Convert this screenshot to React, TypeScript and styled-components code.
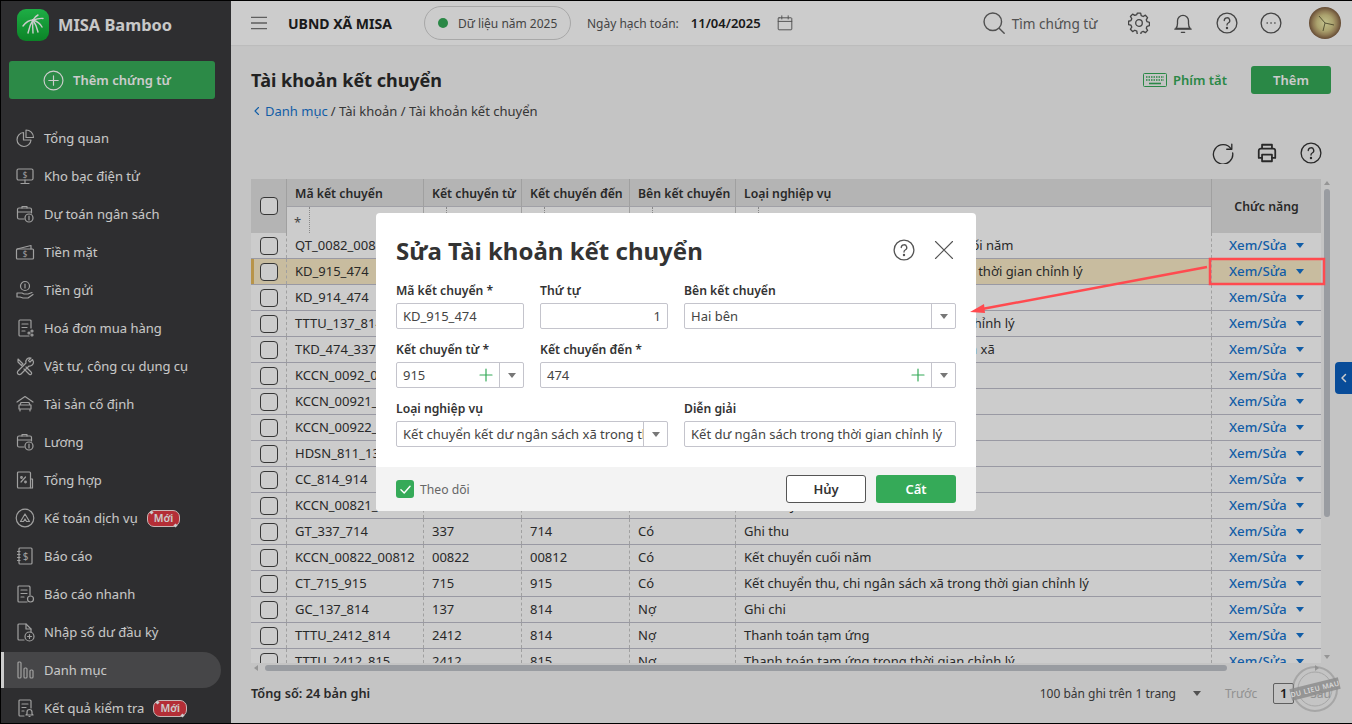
import React from "react"
import styled, { createGlobalStyle } from "styled-components"

const COLUMNS = "35px 137px 98px 108px 106px 476px 110px"

const GlobalStyle = createGlobalStyle`
	html, body {
		margin: 0;
		padding: 0;
		width: 1352px;
		height: 724px;
		overflow: hidden;
		font-family: "Noto Sans", "Open Sans", sans-serif;
		font-size: 13px;
		color: #333;
	}
	* {
		box-sizing: border-box;
	}
`

const Page = styled.div`
	position: relative;
	display: flex;
	width: 1352px;
	height: 724px;
	overflow: hidden;
	background: #f5f5f5;
	border-top: 1px solid #000;
	border-bottom: 1px solid #000;
`

const Sidebar = styled.aside`
	flex: 0 0 231px;
	border-left: 1px solid #000;
	background: #3a3a3c;
	overflow: hidden;
`

const LogoRow = styled.div`
	display: flex;
	align-items: center;
	gap: 9px;
	height: 47px;
	padding-left: 16px;
	color: #fbfbfb;
	font-size: 16.4px;
	font-weight: 700;
`

const AddVoucher = styled.button`
	display: flex;
	align-items: center;
	gap: 9px;
	width: 206px;
	height: 38px;
	margin: 13px 0 0 8px;
	padding: 0 0 0 34px;
	border: 0;
	border-radius: 3px;
	background: #37ad59;
	color: #fff;
	font: 600 13px "Noto Sans", sans-serif;
`

const Nav = styled.nav`
	margin-top: 20px;
`

const NavItem = styled.div<{ $active?: boolean }>`
	display: flex;
	align-items: center;
	gap: 9px;
	height: ${(p) => (p.$active ? "36px" : "38px")};
	margin: ${(p) => (p.$active ? "1px 10px 1px 0" : "0 10px 0 0")};
	padding-left: 11px;
	border-left: 3px solid ${(p) => (p.$active ? "#fff" : "transparent")};
	border-radius: ${(p) => (p.$active ? "0 18px 18px 0" : "0")};
	background: ${(p) => (p.$active ? "#58585a" : "transparent")};
	color: #fafafa;
	font-size: 13px;
	white-space: nowrap;
`

const NewBadge = styled.span`
	position: relative;
	height: 17px;
	padding: 0 6px;
	border: 1px solid #fbe3e3;
	border-radius: 7px;
	background: #e23a44;
	color: #fff;
	font-size: 10.5px;
	font-weight: 600;
	line-height: 15px;

	&::before,
	&::after {
		content: "";
		position: absolute;
		width: 3px;
		height: 3px;
		background: #fff;
		transform: rotate(45deg);
	}
	&::before {
		top: 0;
		left: 2px;
	}
	&::after {
		right: 2px;
		bottom: -1px;
	}
`

const Main = styled.main`
	display: flex;
	flex: 1;
	flex-direction: column;
	min-width: 0;
`

const Topbar = styled.header`
	display: flex;
	align-items: center;
	flex: 0 0 44px;
	padding-left: 20px;
	background: #fff;
	box-shadow: 0 1px 1px rgba(0, 0, 0, 0.04);
`

const OrgName = styled.span`
	margin-left: 21px;
	color: #222;
	font-size: 14px;
	font-weight: 700;
`

const YearPill = styled.div`
	display: flex;
	align-items: center;
	gap: 10px;
	width: 147px;
	height: 34px;
	margin-left: 32px;
	padding-left: 13px;
	border: 1px solid #d2d2d2;
	border-radius: 17px;
	color: #555;
	font-size: 12px;
`

const GreenDot = styled.i`
	width: 10px;
	height: 10px;
	border-radius: 50%;
	background: #35aa58;
`

const PostLabel = styled.span`
	margin-left: 16px;
	color: #555;
	font-size: 12px;
`

const PostDate = styled.span`
	margin: 0 16px 0 12px;
	color: #222;
	font-size: 13px;
	font-weight: 600;
`

const SearchText = styled.span`
	margin-left: 6px;
	color: #666;
	font-size: 13.6px;
`

const SearchBox = styled.div`
	display: flex;
	align-items: center;
	margin-left: 189px;
`

const TopIcons = styled.div`
	display: flex;
	align-items: center;
	gap: 22px;
	margin-left: 31px;
`

const Content = styled.div`
	display: flex;
	flex: 1;
	flex-direction: column;
	min-height: 0;
	padding: 0 21px 0 20px;
`

const TitleRow = styled.div`
	display: flex;
	align-items: center;
	flex: 0 0 28px;
	margin-top: 21px;
`

const PageTitle = styled.h1`
	flex: 1;
	margin: 0;
	color: #2b2b2b;
	font-size: 18px;
	font-weight: 700;
`

const Shortcut = styled.span`
	display: flex;
	align-items: center;
	gap: 6px;
	margin-right: 24px;
	color: #35aa58;
	font-size: 13px;
	font-weight: 600;
`

const GreenButton = styled.button<{ $width?: number }>`
	width: ${(p) => p.$width ?? 80}px;
	height: 28px;
	border: 0;
	border-radius: 3px;
	background: #35aa58;
	color: #fff;
	font: 600 13px "Noto Sans", sans-serif;
`

const Breadcrumb = styled.div`
	display: flex;
	align-items: center;
	gap: 3px;
	height: 20px;
	margin-top: 7px;
	padding-left: 1px;
	color: #444;
	font-size: 13px;
`

const CrumbLink = styled.span`
	color: #1675d1;
`

const Toolbar = styled.div`
	display: flex;
	align-items: center;
	justify-content: flex-end;
	gap: 22px;
	flex: 0 0 24px;
	margin-top: 20px;
	margin-bottom: 14px;
	padding-right: 9px;
`

const TableRegion = styled.div`
	display: grid;
	grid-template-columns: 1070px 10px;
	grid-template-rows: 484px 10px;
`

const TableClip = styled.div`
	overflow: hidden;
`

const HeadGrid = styled.div`
	display: grid;
	grid-template-columns: ${COLUMNS};
	grid-template-rows: 28px 26px;
	border-bottom: 1px solid #c0c0cc;
	height: 54px;
`

const HeadTall = styled.div<{ $center?: boolean }>`
	display: flex;
	align-items: center;
	justify-content: center;
	grid-row: 1 / 3;
	grid-column: ${(p) => (p.$center ? 7 : 1)};
	background: #e2e2e2;
	border-left: ${(p) => (p.$center ? "1px solid #c8c8c8" : "0")};
	color: #333;
	font-size: 12.25px;
	font-weight: 600;
`

const HeadCell = styled.div`
	display: flex;
	align-items: center;
	padding: 2px 0 0 8px;
	border-left: 1px solid #c8c8c8;
	border-bottom: 1px solid #c8c8d0;
	background: #e2e2e2;
	color: #333;
	font-size: 12.25px;
	font-weight: 600;
	white-space: nowrap;
`

const FilterCell = styled.div`
	display: flex;
	align-items: center;
	border-left: 1px solid #c8c8c8;
	background: #fff;
`

const FilterOp = styled.span`
	flex: 0 0 23px;
	height: 100%;
	padding: 6px 0 0 7px;
	border-right: 1px dotted #aaa;
	color: #555;
	font-size: 13px;
`

const BodyRow = styled.div<{ $marked?: boolean }>`
	display: grid;
	grid-template-columns: ${COLUMNS};
	height: 26px;
	border-bottom: 1px solid #c0c0cc;
	background: ${(p) => (p.$marked ? "#fbecc7" : "#fff")};
	box-shadow: ${(p) => (p.$marked ? "inset 3px 0 0 #e6b95c" : "none")};
`

const Cell = styled.div`
	padding-left: 8px;
	border-left: 1px dashed #c8c8c8;
	color: #333;
	font-size: 13px;
	line-height: 25px;
	white-space: nowrap;
	overflow: hidden;
`

const CheckCell = styled.div`
	display: flex;
	align-items: center;
	justify-content: center;
`

const Check = styled.span`
	width: 18px;
	height: 18px;
	border: 1px solid #444;
	border-radius: 4px;
	background: #fff;
`

const ActionCell = styled(Cell)`
	display: flex;
	align-items: center;
	gap: 9px;
	padding-left: 17px;
	color: #1675d1;
	font-size: 13.3px;
	font-weight: 500;
`

const Caret = styled.i<{ $color?: string; $size?: number }>`
	display: inline-block;
	width: 0;
	height: 0;
	border-left: ${(p) => p.$size ?? 4}px solid transparent;
	border-right: ${(p) => p.$size ?? 4}px solid transparent;
	border-top: ${(p) => (p.$size ?? 4) + 1}px solid ${(p) => p.$color ?? "#777"};
`

const VRail = styled.div`
	display: flex;
	flex-direction: column;
	align-items: center;
	padding: 2px 0 0 2px;
`

const VThumb = styled.div`
	width: 6px;
	height: 328px;
	margin-top: 4px;
	border-radius: 3px;
	background: #c0c3ca;
`

const ArrowUp = styled.i`
	width: 0;
	height: 0;
	border-left: 3px solid transparent;
	border-right: 3px solid transparent;
	border-bottom: 4px solid #bbb;
`

const ArrowDown = styled(ArrowUp)`
	margin-top: auto;
	margin-bottom: 4px;
	transform: rotate(180deg);
`

const HRail = styled.div`
	display: flex;
	align-items: center;
	padding: 0 2px 0 3px;
`

const HThumb = styled.div`
	flex: 0 0 962px;
	height: 6px;
	margin-left: 7px;
	border-radius: 3px;
	background: #c0c3ca;
`

const ArrowLeft = styled.i`
	width: 0;
	height: 0;
	border-top: 3px solid transparent;
	border-bottom: 3px solid transparent;
	border-right: 4px solid #bbb;
`

const ArrowRight = styled(ArrowLeft)`
	margin-left: auto;
	transform: rotate(180deg);
`

const Footer = styled.footer`
	display: flex;
	align-items: center;
	flex: 1;
	padding-bottom: 10px;
`

const Total = styled.span`
	flex: 1;
	color: #333;
	font-size: 12.75px;
	font-weight: 600;
`

const PageSize = styled.span`
	margin-right: 17px;
	color: #444;
	font-size: 12px;
`

const PageMuted = styled.span<{ $first?: boolean }>`
	margin-left: ${(p) => (p.$first ? "24px" : "0")};
	color: #b5b5b5;
	font-size: 12px;
`

const PageNumber = styled.span`
	width: 21px;
	height: 21px;
	margin: 0 16px;
	border: 1px solid #777;
	border-radius: 2px;
	color: #222;
	font-size: 13px;
	font-weight: 600;
	line-height: 19px;
	text-align: center;
`

const Overlay = styled.div`
	position: absolute;
	inset: -1px 0;
	display: flex;
	align-items: center;
	justify-content: center;
	background: rgba(0, 0, 0, 0.2);
`

const Modal = styled.div`
	display: flex;
	flex-direction: column;
	width: 600px;
	height: 298px;
	border-radius: 4px;
	overflow: hidden;
	background: #fff;
`

const ModalHead = styled.div`
	display: flex;
	align-items: center;
	gap: 19px;
	flex: 0 0 68px;
	padding: 6px 22px 0 20px;
`

const ModalTitle = styled.h2`
	flex: 1;
	margin: 0;
	color: #333;
	font-size: 24px;
	font-weight: 700;
`

const FormGrid = styled.div`
	display: grid;
	grid-template-columns: 128px 128px 272px;
	column-gap: 16px;
	row-gap: 11px;
	flex: 1;
	align-content: start;
	padding: 0 20px;
`

const Field = styled.div<{ $span?: number }>`
	grid-column: auto / span ${(p) => p.$span ?? 1};
`

const FieldLabel = styled.label`
	display: block;
	height: 18px;
	margin-bottom: 4px;
	color: #333;
	font-size: 12.2px;
	font-weight: 600;
	line-height: 20px;
`

const Control = styled.div`
	display: flex;
	align-items: center;
	height: 26px;
	border: 1px solid #c4c4cc;
	border-radius: 2px;
	background: #fff;
	color: #444;
	font-size: 13px;
`

const ControlText = styled.span<{ $right?: boolean }>`
	flex: 1;
	min-width: 0;
	padding: 0 6px;
	overflow: hidden;
	text-align: ${(p) => (p.$right ? "right" : "left")};
	white-space: nowrap;
`

const PlusMark = styled.span`
	display: flex;
	margin-right: 5px;
`

const DropButton = styled.span`
	display: flex;
	align-items: center;
	justify-content: center;
	flex: 0 0 24px;
	height: 100%;
	border-left: 1px solid #c4c4cc;
`

const ModalFooter = styled.div`
	display: flex;
	align-items: center;
	flex: 0 0 44px;
	padding: 0 20px;
	background: #f3f3f3;
`

const GreenCheck = styled.span`
	display: flex;
	align-items: center;
	justify-content: center;
	width: 18px;
	height: 18px;
	border-radius: 3px;
	background: #35aa58;
`

const WatchLabel = styled.span`
	flex: 1;
	margin-left: 6px;
	color: #666;
	font-size: 12.2px;
`

const CancelButton = styled.button`
	width: 80px;
	height: 28px;
	margin-right: 10px;
	border: 1px solid #555;
	border-radius: 3px;
	background: #fff;
	color: #333;
	font: 600 13px "Noto Sans", sans-serif;
`

const BlueTab = styled.div`
	position: absolute;
	top: 361px;
	right: 0;
	display: flex;
	align-items: center;
	justify-content: center;
	width: 17px;
	height: 32px;
	border-radius: 4px 0 0 4px;
	background: #0a5fc0;
`

const Annotation = styled.svg`
	position: absolute;
	top: -1px;
	left: 0;
	pointer-events: none;
`

const Stamp = styled.svg`
	position: absolute;
	top: 663px;
	left: 1285px;
`

const Ico = ({ children, size = 20, color = "#c8c8c8", width = 1.2 }: { children: React.ReactNode; size?: number; color?: string; width?: number }) => (
	<svg width={size} height={size} viewBox="0 0 20 20" fill="none" stroke={color} strokeWidth={width} strokeLinecap="round" strokeLinejoin="round" style={{ flex: "none" }}>
		{children}
	</svg>
)

const navIcons: Record<string, React.ReactNode> = {
	pie: (
		<>
			<path d="M8.5 4.5a7 7 0 1 0 7.5 7.5H8.5z" />
			<path d="M11 2v7.5h7.5A7.5 7.5 0 0 0 11 2z" />
		</>
	),
	monitor: (
		<>
			<rect x="2" y="3" width="16" height="11" rx="1.5" />
			<path d="M10 14v3M6 17.5h8" />
			<text x="10" y="11.5" fontSize="8" fill="#c8c8c8" stroke="none" textAnchor="middle">$</text>
		</>
	),
	budget: (
		<>
			<path d="M9 15H4a1.5 1.5 0 0 1-1.5-1.5v-8A1.5 1.5 0 0 1 4 4h11a1.5 1.5 0 0 1 1.5 1.5V9" />
			<path d="M2.5 8h14M7 4V2.5h5V4" />
			<circle cx="14" cy="14" r="4" />
			<path d="M14 12v4" />
		</>
	),
	cash: (
		<>
			<path d="M2 7l14-3.5V7" />
			<rect x="1.5" y="7" width="17" height="10" rx="1" />
			<text x="10" y="15" fontSize="8" fill="#c8c8c8" stroke="none" textAnchor="middle">$</text>
		</>
	),
	deposit: (
		<>
			<circle cx="10" cy="6" r="4.5" />
			<path d="M10 4v4" />
			<path d="M2 13h5l2 1h4l4-1.5M2 13v4h3l3 1h5l5-3.5" />
		</>
	),
	invoice: (
		<>
			<path d="M16 10V3a1 1 0 0 0-1-1H5a1 1 0 0 0-1 1v14a1 1 0 0 0 1 1h9" />
			<path d="M7 6h6M7 9.5h5M7 13h3" />
			<circle cx="17" cy="13" r="1" />
			<circle cx="14" cy="15" r="1" />
			<circle cx="17" cy="17" r="1" />
		</>
	),
	tools: (
		<>
			<path d="M3 3l5 5-1.5 1.5L3 6zM11 11l5.5 5.5a1.5 1.5 0 0 1-2 2L9 13" />
			<path d="M17.5 3.5l-2.5 2.5-1.5-1.5L16 2a4 4 0 0 0-5 5L3 15a2 2 0 0 0 3 3l8-8a4 4 0 0 0 4.5-4z" />
		</>
	),
	asset: (
		<>
			<path d="M2 8l8-5.5L18 8" />
			<path d="M5 11l1-2.5h8l1 2.5M4 11h12v4H4zM5 15v2M15 15v2" />
		</>
	),
	tax: (
		<>
			<rect x="2.5" y="2" width="13" height="16" rx="1" />
			<path d="M15.5 9h2v9h-2M6 12l4.5-5" />
			<circle cx="6.5" cy="7.5" r=".8" />
			<circle cx="10.5" cy="12" r=".8" />
		</>
	),
	service: (
		<>
			<circle cx="10" cy="10" r="8.8" />
			<path d="M5.5 13.5L10 6l4.5 7.5h-3L10 11l-1.5 2.5z" />
		</>
	),
	report: (
		<>
			<rect x="4" y="2" width="13" height="16" rx="1" />
			<path d="M2.5 5.5H5M2.5 8.5H5M2.5 11.5H5M2.5 14.5H5" />
			<text x="10.5" y="13.5" fontSize="10" fill="#c8c8c8" stroke="none" textAnchor="middle">$</text>
		</>
	),
	quick: (
		<>
			<path d="M12 18H4a1 1 0 0 1-1-1V3a1 1 0 0 1 1-1h10l1 1v8" />
			<path d="M6 6h6M6 9.5h6M6 13h3" />
			<circle cx="15.5" cy="15" r="3" />
		</>
	),
	opening: (
		<>
			<path d="M9 18H4a1 1 0 0 1-1-1V3a1 1 0 0 1 1-1h7l5 5v3" />
			<path d="M11 2v5h5" />
			<circle cx="14.5" cy="14.5" r="4.5" />
			<path d="M14.5 12.5v4M12.5 14.5h4" />
		</>
	),
	catalog: (
		<>
			<rect x="3" y="2" width="3" height="16" rx="1" />
			<rect x="9" y="8" width="3" height="10" rx="1" />
			<rect x="15" y="10" width="3" height="8" rx="1" />
		</>
	),
	check: (
		<>
			<path d="M9 18H5a1 1 0 0 1-1-1V3a1 1 0 0 1 1-1h10a1 1 0 0 1 1 1v7" />
			<path d="M7 6h6M7 9.5h4M7 13h2" />
			<path d="M11 17l1-1v-2a2.5 2.5 0 0 1 5 0v2l1 1zM14 18.5h1" />
		</>
	),
}

const navItems: { label: string; icon: string; badge?: boolean; active?: boolean }[] = [
	{ label: "Tổng quan", icon: "pie" },
	{ label: "Kho bạc điện tử", icon: "monitor" },
	{ label: "Dự toán ngân sách", icon: "budget" },
	{ label: "Tiền mặt", icon: "cash" },
	{ label: "Tiền gửi", icon: "deposit" },
	{ label: "Hoá đơn mua hàng", icon: "invoice" },
	{ label: "Vật tư, công cụ dụng cụ", icon: "tools" },
	{ label: "Tài sản cố định", icon: "asset" },
	{ label: "Lương", icon: "budget" },
	{ label: "Tổng hợp", icon: "tax" },
	{ label: "Kế toán dịch vụ", icon: "service", badge: true },
	{ label: "Báo cáo", icon: "report" },
	{ label: "Báo cáo nhanh", icon: "quick" },
	{ label: "Nhập số dư đầu kỳ", icon: "opening" },
	{ label: "Danh mục", icon: "catalog", active: true },
	{ label: "Kết quả kiểm tra", icon: "check", badge: true },
]

const rows = [
	["QT_0082_0081", "0082", "0081", "Nợ", "Kết chuyển thu, chi ngân sách tỉnh cuối năm"],
	["KD_915_474", "915", "474", "Hai bên", "Kết chuyển kết dư ngân sách xã trong thời gian chỉnh lý"],
	["KD_914_474", "914", "474", "Hai bên", "Kết chuyển kết dư ngân sách xã"],
	["TTTU_137_814", "137", "814", "Nợ", "Thanh toán tạm ứng trong thời gian chỉnh lý"],
	["TKD_474_337", "474", "337", "Nợ", "Thu từ kết dư năm trước về ngân sách xã"],
	["KCCN_0092_00", "0092", "00", "Có", "Kết chuyển cuối năm"],
	["KCCN_00921_00", "00921", "00", "Có", "Kết chuyển cuối năm"],
	["KCCN_00922_00", "00922", "00", "Có", "Kết chuyển cuối năm"],
	["HDSN_811_137", "811", "137", "Nợ", "Hoàn trả"],
	["CC_814_914", "814", "914", "Có", "Ghi chi"],
	["KCCN_00821_00", "00821", "00", "Có", "Kết chuyển cuối năm"],
	["GT_337_714", "337", "714", "Có", "Ghi thu"],
	["KCCN_00822_00812", "00822", "00812", "Có", "Kết chuyển cuối năm"],
	["CT_715_915", "715", "915", "Có", "Kết chuyển thu, chi ngân sách xã trong thời gian chỉnh lý"],
	["GC_137_814", "137", "814", "Nợ", "Ghi chi"],
	["TTTU_2412_814", "2412", "814", "Nợ", "Thanh toán tạm ứng"],
	["TTTU_2412_815", "2412", "815", "Nợ", "Thanh toán tạm ứng trong thời gian chỉnh lý"],
]

const Plus = () => (
	<PlusMark>
		<Ico size={16} color="#35aa58" width={1.5}>
			<path d="M10 2.5v15M2.5 10h15" />
		</Ico>
	</PlusMark>
)

const Drop = () => (
	<DropButton>
		<Caret $color="#777" />
	</DropButton>
)

const HelpIcon = ({ size = 20, color = "#555" }: { size?: number; color?: string }) => (
	<Ico size={size} color={color} width={1.2}>
		<circle cx="10" cy="10" r="9" />
		<path d="M7.5 7.7a2.5 2.5 0 1 1 3.6 2.3c-.8.4-1.1.9-1.1 1.8" />
		<circle cx="10" cy="14.6" r=".5" fill={color} />
	</Ico>
)

export default function App() {
	return (
		<Page>
			<GlobalStyle />
			<Sidebar>
				<LogoRow>
					<svg width="32" height="32" viewBox="0 0 32 32" style={{ flex: "none" }}>
						<defs>
							<linearGradient id="logoFill" x1="0" y1="0" x2="0" y2="1">
								<stop offset="0" stopColor="#26d957" />
								<stop offset="1" stopColor="#0ea531" />
							</linearGradient>
						</defs>
						<rect width="32" height="32" rx="9" fill="url(#logoFill)" />
						<g stroke="#fff" strokeWidth="1.4" fill="none" strokeLinecap="round">
							<path d="M16 11C13 11 9 13 6 17" />
							<path d="M16 11c-2 3-4 8-5 13" />
							<path d="M16 11c-.5 4-.5 8 0 13" />
							<path d="M16 11c2 3 4 7 5 12" />
							<path d="M16 11c3 1 7 3 9 7" />
							<path d="M16 11c3-1 6-2 10-1.5" />
							<path d="M16 11c1-2 3-4 5-5" />
						</g>
					</svg>
					MISA Bamboo
				</LogoRow>
				<AddVoucher>
					<Ico color="#fff" size={21} width={1.1}>
						<circle cx="10" cy="10" r="9" />
						<path d="M10 5.5v9M5.5 10h9" />
					</Ico>
					Thêm chứng từ
				</AddVoucher>
				<Nav>
					{navItems.map((item) => (
						<NavItem key={item.label} $active={item.active}>
							<Ico>{navIcons[item.icon]}</Ico>
							{item.label}
							{item.badge && <NewBadge>Mới</NewBadge>}
						</NavItem>
					))}
				</Nav>
			</Sidebar>
			<Main>
				<Topbar>
					<Ico color="#777" size={16} width={1.6}>
						<path d="M0 3h20M0 10h20M0 17h20" />
					</Ico>
					<OrgName>UBND XÃ MISA</OrgName>
					<YearPill>
						<GreenDot />
						Dữ liệu năm 2025
					</YearPill>
					<PostLabel>Ngày hạch toán:</PostLabel>
					<PostDate>11/04/2025</PostDate>
					<Ico color="#666" size={16}>
						<rect x="1.5" y="3.5" width="17" height="15" rx="1" />
						<path d="M1.5 8h17M6 1v4M14 1v4" />
					</Ico>
					<SearchBox>
						<Ico color="#666" size={24}>
							<circle cx="9" cy="9" r="7.3" />
							<path d="M14.5 14.5l4 4" />
						</Ico>
						<SearchText>Tìm chứng từ</SearchText>
					</SearchBox>
					<TopIcons>
						<Ico color="#555" size={22} width={1.2}>
							<path d="M8.5 2h3l.5 2.3 1.8.8 2-1.2 2 2.2-1.2 2 .7 1.7 2.2.6v3l-2.2.6-.7 1.7 1.2 2-2 2.1-2-1.2-1.8.8-.5 2.3h-3L8 18.4l-1.8-.8-2 1.2-2-2.1 1.2-2-.7-1.7L.5 12.4v-3l2.2-.6.7-1.7-1.2-2 2-2.2 2 1.2L8 3.3z" transform="translate(0 -1)" />
							<circle cx="10" cy="10" r="3" />
						</Ico>
						<Ico color="#555" size={22} width={1.2}>
							<path d="M3.5 15c1.2-1.3 1.5-2.5 1.5-4.5V8a5 5 0 0 1 10 0v2.5c0 2 .3 3.2 1.5 4.5z" />
							<path d="M2.5 15.5h15M8.5 18.5h3" />
						</Ico>
						<HelpIcon size={22} />
						<Ico color="#555" size={22} width={1.2}>
							<circle cx="10" cy="10" r="9" />
							<path d="M6.5 10h.1M10 10h.1M13.5 10h.1" strokeWidth={1.5} />
						</Ico>
					</TopIcons>
					<svg width="32" height="32" viewBox="0 0 32 32" style={{ marginLeft: 27, flex: "none" }}>
						<defs>
							<radialGradient id="clockFill">
								<stop offset="0" stopColor="#f4f2b0" />
								<stop offset="0.5" stopColor="#d6cb8a" />
								<stop offset="0.75" stopColor="#b39a6a" />
								<stop offset="1" stopColor="#7f5f42" />
							</radialGradient>
						</defs>
						<circle cx="16" cy="16" r="16" fill="url(#clockFill)" />
						<path d="M16 16L10 9M16 16l9 2M16 16l-2 8" stroke="#4e4a2c" strokeWidth=".8" />
					</svg>
				</Topbar>
				<Content>
					<TitleRow>
						<PageTitle>Tài khoản kết chuyển</PageTitle>
						<Shortcut>
							<svg width="24" height="14" viewBox="0 0 24 14" fill="none" stroke="#35aa58">
								<rect x=".5" y=".5" width="23" height="13" rx="1" />
								<path d="M3 4h18M3 7h18" strokeDasharray="1.5 1" strokeWidth="1.6" />
								<path d="M6 10.5h12" strokeWidth="1.6" />
							</svg>
							Phím tắt
						</Shortcut>
						<GreenButton>Thêm</GreenButton>
					</TitleRow>
					<Breadcrumb>
						<Ico color="#1675d1" size={10} width={2.2}>
							<path d="M13 3l-7 7 7 7" />
						</Ico>
						<CrumbLink>Danh mục</CrumbLink>/ Tài khoản / Tài khoản kết chuyển
					</Breadcrumb>
					<Toolbar>
						<Ico color="#333" size={22} width={1.2}>
							<path d="M17.5 6.5A8.8 8.8 0 1 0 18.8 10" />
							<path d="M18 2v4.6h-4.6" />
						</Ico>
						<Ico color="#333" size={22} width={1.6}>
							<path d="M5.5 6V2.5h9V6M5.5 14.5h-3V8a2 2 0 0 1 2-2h11a2 2 0 0 1 2 2v6.5h-3" />
							<rect x="5.5" y="11.5" width="9" height="6" />
						</Ico>
						<HelpIcon size={22} color="#333" />
					</Toolbar>
					<TableRegion>
						<TableClip>
							<HeadGrid>
								<HeadTall>
									<Check />
								</HeadTall>
								<HeadCell>Mã kết chuyển</HeadCell>
								<HeadCell>Kết chuyển từ</HeadCell>
								<HeadCell>Kết chuyển đến</HeadCell>
								<HeadCell>Bên kết chuyển</HeadCell>
								<HeadCell>Loại nghiệp vụ</HeadCell>
								<HeadTall $center>Chức năng</HeadTall>
								{[0, 1, 2, 3, 4].map((i) => (
									<FilterCell key={i}>
										<FilterOp>*</FilterOp>
									</FilterCell>
								))}
							</HeadGrid>
							{rows.map((row, i) => (
								<BodyRow key={row[0]} $marked={i === 1}>
									<CheckCell>
										<Check />
									</CheckCell>
									{row.map((value, j) => (
										<Cell key={j}>{value}</Cell>
									))}
									<ActionCell>
										Xem/Sửa
										<Caret $color="#1675d1" $size={4.5} />
									</ActionCell>
								</BodyRow>
							))}
						</TableClip>
						<VRail>
							<ArrowUp />
							<VThumb />
							<ArrowDown />
						</VRail>
						<HRail>
							<ArrowLeft />
							<HThumb />
							<ArrowRight />
						</HRail>
					</TableRegion>
					<Footer>
						<Total>Tổng số: 24 bản ghi</Total>
						<PageSize>100 bản ghi trên 1 trang</PageSize>
						<Caret $color="#666" />
						<PageMuted $first>Trước</PageMuted>
						<PageNumber>1</PageNumber>
						<PageMuted>Sau</PageMuted>
					</Footer>
				</Content>
			</Main>
			<BlueTab>
				<Ico color="#fff" size={10} width={3}>
					<path d="M13 3l-7 7 7 7" />
				</Ico>
			</BlueTab>
			<Overlay>
				<Modal>
					<ModalHead>
						<ModalTitle>Sửa Tài khoản kết chuyển</ModalTitle>
						<HelpIcon size={22} />
						<Ico size={20} color="#555" width={1.1}>
							<path d="M1.5 1.5l17 17M18.5 1.5l-17 17" />
						</Ico>
					</ModalHead>
					<FormGrid>
						<Field>
							<FieldLabel>Mã kết chuyển *</FieldLabel>
							<Control>
								<ControlText>KD_915_474</ControlText>
							</Control>
						</Field>
						<Field>
							<FieldLabel>Thứ tự</FieldLabel>
							<Control>
								<ControlText $right>1</ControlText>
							</Control>
						</Field>
						<Field>
							<FieldLabel>Bên kết chuyển</FieldLabel>
							<Control>
								<ControlText>Hai bên</ControlText>
								<Drop />
							</Control>
						</Field>
						<Field>
							<FieldLabel>Kết chuyển từ *</FieldLabel>
							<Control>
								<ControlText>915</ControlText>
								<Plus />
								<Drop />
							</Control>
						</Field>
						<Field $span={2}>
							<FieldLabel>Kết chuyển đến *</FieldLabel>
							<Control>
								<ControlText>474</ControlText>
								<Plus />
								<Drop />
							</Control>
						</Field>
						<Field $span={2}>
							<FieldLabel>Loại nghiệp vụ</FieldLabel>
							<Control>
								<ControlText>Kết chuyển kết dư ngân sách xã trong thời gian chỉnh lý</ControlText>
								<Drop />
							</Control>
						</Field>
						<Field>
							<FieldLabel>Diễn giải</FieldLabel>
							<Control>
								<ControlText>Kết dư ngân sách trong thời gian chỉnh lý</ControlText>
							</Control>
						</Field>
					</FormGrid>
					<ModalFooter>
						<GreenCheck>
							<Ico size={13} color="#fff" width={2.2}>
								<path d="M3 10.5l5 5L17 5" />
							</Ico>
						</GreenCheck>
						<WatchLabel>Theo dõi</WatchLabel>
						<CancelButton>Hủy</CancelButton>
						<GreenButton>Cất</GreenButton>
					</ModalFooter>
				</Modal>
			</Overlay>
			<Annotation width="1352" height="724" viewBox="0 0 1352 724">
				<rect x="1210" y="259" width="114" height="25" fill="none" stroke="#ff4a4f" strokeWidth="2.5" />
				<path d="M1207 267L982 309" stroke="#ff4a4f" strokeWidth="2.5" />
				<path d="M970 312L984 304L985 313z" fill="#ff4a4f" />
			</Annotation>
			<Stamp width="60" height="50" viewBox="0 0 60 50">
				<g fill="none" stroke="#8f8f8f" opacity="0.55">
					<circle cx="30" cy="25" r="22" strokeWidth="2" />
					<circle cx="30" cy="25" r="17" strokeWidth="1" />
				</g>
				<g transform="rotate(-14 30 25)">
					<rect x="5" y="19" width="50" height="12" fill="#8d8d8d" opacity="0.85" />
					<text x="30" y="27.5" fontSize="7" fontWeight="600" fill="#d8d8d8" textAnchor="middle" letterSpacing="0.4">DU LIEU MAU</text>
				</g>
			</Stamp>
		</Page>
	)
}
